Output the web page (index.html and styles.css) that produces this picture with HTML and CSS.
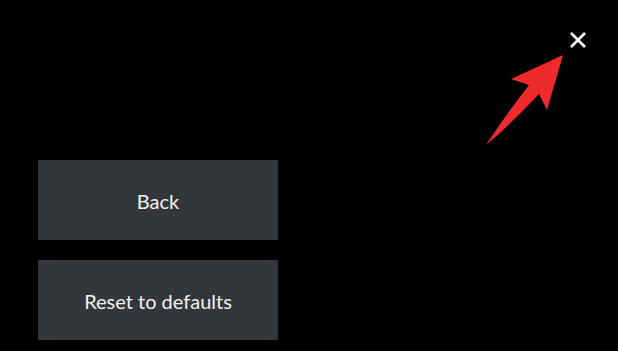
FILE: index.html
```html
<!DOCTYPE html>
<html>
<head>
  <meta charset="UTF-8">
  <title>Settings</title>
  <link rel="stylesheet" href="styles.css">
</head>
<body>

<button class="close-btn" aria-label="Close">
  <svg width="18" height="16" viewBox="0 0 18 16">
    <path d="M2 1 L16 15 M16 1 L2 15" stroke="#fff" stroke-width="2.6" stroke-linecap="butt"/>
  </svg>
</button>

<svg class="pointer" width="90" height="100" viewBox="480 50 90 100">
  <path d="M563 55 L547 110 L539 94 Q512 123 486 145 Q505 116 529 85 L511 79 Z" fill="#ee2a2a"/>
</svg>

<div class="menu">
  <button class="menu-btn">Back</button>
  <button class="menu-btn">Reset to defaults</button>
</div>

</body>
</html>
```

FILE: styles.css
```css
body {
  margin: 0;
  width: 618px;
  height: 351px;
  background: #000;
  font-family: "Lato", "Noto Sans", sans-serif;
  overflow: hidden;
}
.menu {
  display: flex;
  flex-direction: column;
  gap: 20px;
  padding: 160px 0 0 38px;
}
.menu-btn {
  width: 240px;
  height: 80px;
  border: 0;
  background: #33363b;
  color: #f2f2f2;
  font-family: inherit;
  font-size: 20px;
  padding: 2px 0 0;
}
.close-btn {
  position: absolute;
  top: 32px;
  left: 569px;
  width: 18px;
  height: 16px;
  border: 0;
  padding: 0;
  background: none;
  display: block;
}
.close-btn svg {
  display: block;
}
.pointer {
  position: absolute;
  left: 480px;
  top: 50px;
}
```
